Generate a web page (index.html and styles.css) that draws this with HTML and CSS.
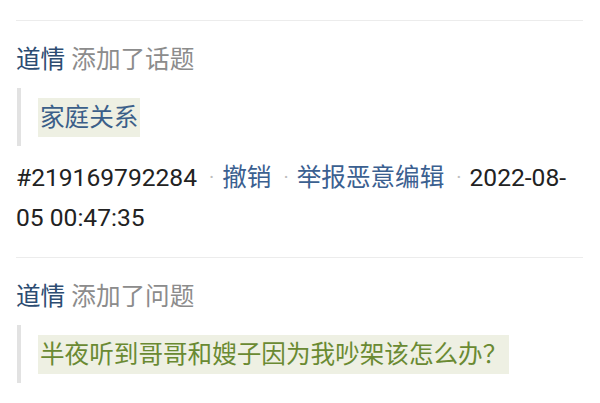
FILE: index.html
```html
<!DOCTYPE html>
<html lang="zh-CN">
<head>
    <meta charset="UTF-8">
    <meta name="viewport" content="width=device-width, initial-scale=1.0">
    <title>编辑记录</title>
    <link rel="stylesheet" href="styles.css">
</head>
<body>

<div class="feed">
    <div class="item">
        <div class="action"><a class="user" href="#">道情</a> 添加了话题</div>
        <blockquote class="quote">
            <span class="mark topic">家庭关系</span>
        </blockquote>
        <div class="meta">#219169792284<span class="sep">·</span><a href="#">撤销</a><span class="sep">·</span><a href="#">举报恶意编辑</a><span class="sep">·</span>2022-08-<wbr>05 00:47:35</div>
    </div>

    <div class="item">
        <div class="action"><a class="user" href="#">道情</a> 添加了问题</div>
        <blockquote class="quote">
            <span class="mark question">半夜听到哥哥和嫂子因为我吵架该怎么办？</span>
        </blockquote>
    </div>
</div>

</body>
</html>
```

FILE: styles.css
```css
body {
    margin: 0;
    padding: 0;
    background-color: #fff;
    font-family: Roboto, "Noto Sans CJK SC", sans-serif;
    font-size: 24.6px;
    color: #222;
}
.feed {
    padding: 20px 17px 0 16px;
}
.item {
    border-top: 1px solid #ececec;
    padding: 19px 0 19px 0;
}
.action {
    line-height: 40px;
    color: #8c8c8c;
}
.user {
    color: #2c4c72;
    text-decoration: none;
}
.quote {
    margin: 8px 0 0 1px;
    padding: 10px 0 9px 17px;
    border-left: 4px solid #e2e2e2;
}
.mark {
    display: inline-block;
    line-height: 39px;
    padding: 0 2px;
    background-color: #eef0e3;
}
.topic {
    color: #3b5f89;
}
.question {
    color: #6a8a32;
}
.meta {
    margin-top: 11px;
    line-height: 40px;
    color: #222;
}
.meta a {
    color: #3b6090;
    text-decoration: none;
}
.sep {
    color: #bdbdbd;
    font-size: 20px;
    margin: 0 8px 0 12px;
    vertical-align: 2px;
}
```
